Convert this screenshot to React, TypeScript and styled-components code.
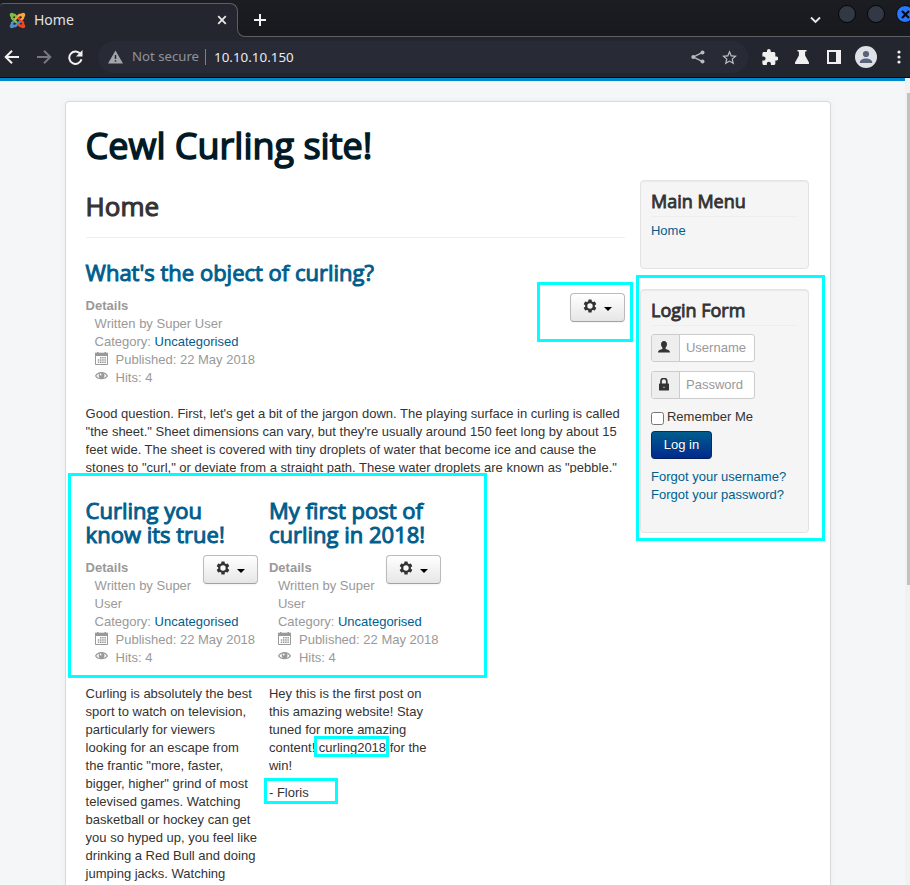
import React from 'react';
import styled, { createGlobalStyle } from 'styled-components';

const GlobalStyle = createGlobalStyle`
  * { box-sizing: border-box; }
  html, body { margin: 0; padding: 0; }
  body {
    width: 910px;
    height: 885px;
    overflow: hidden;
    background: #f4f6f7;
    font: 13px/18px "Liberation Sans", Arial, sans-serif;
    color: #333;
  }
  svg { display: block; flex: none; }
`;

const Window = styled.div`
  width: 910px;
  height: 885px;
  display: flex;
  flex-direction: column;
  overflow: hidden;
`;

const TabStrip = styled.div`
  height: 37px;
  flex: none;
  display: flex;
  background: linear-gradient(#1b1d23, #17191d);
`;

const Tab = styled.div`
  width: 238px;
  height: 34px;
  margin-top: 3px;
  padding: 0 10px 1px 9px;
  display: flex;
  align-items: center;
  background: #23262f;
  border-top: 1px solid #5c5e64;
  border-right: 1px solid #5c5e64;
  border-radius: 4px 8px 0 0;
  font: 14px/18px "Noto Sans", sans-serif;
  color: #e0e1e3;
`;

const TabTitle = styled.span`
  margin-left: 8px;
  flex: 1;
`;

const StripRest = styled.div`
  flex: 1;
  height: 37px;
  display: flex;
  position: relative;
  border-bottom: 1px solid #5c5e64;

  &::before,
  &::after {
    content: '';
    position: absolute;
    left: -1px;
    bottom: -1px;
    width: 8px;
    height: 8px;
    background: #23262f;
  }

  &::after {
    background: #17191d;
    border-left: 1px solid #5c5e64;
    border-bottom: 1px solid #5c5e64;
    border-bottom-left-radius: 8px;
  }
`;

const NewTab = styled.div`
  margin: 13px 0 0 15px;
  flex: 1;
`;

const Chevron = styled.div`
  margin: 16px 17px 0 0;
`;

const WindowButton = styled.div<{ $close?: boolean }>`
  width: 18px;
  height: 18px;
  flex: none;
  margin: 5px 11px 0 0;
  display: flex;
  align-items: center;
  justify-content: center;
  border-radius: 50%;
  border: 1px solid #050608;
  background: ${(p) => (p.$close ? '#2777ff' : '#333944')};
`;

const ButtonGroup = styled.div`
  width: 72px;
  display: flex;
  overflow: hidden;
`;

const Toolbar = styled.div`
  height: 41px;
  flex: none;
  display: flex;
  align-items: center;
  padding-left: 4px;
  background: #23262f;
  border-bottom: 1px solid #05070a;
`;

const NavIcon = styled.div<{ $gap: number }>`
  margin-right: ${(p) => p.$gap}px;
`;

const Omnibox = styled.div`
  width: 650px;
  height: 32px;
  flex: none;
  margin-right: 14px;
  padding: 0 11px 0 10px;
  display: flex;
  align-items: center;
  border-radius: 16px;
  background: #282b36;
  font: 13.4px/18px "Noto Sans", sans-serif;
  color: #e9eaed;
`;

const Security = styled.span`
  width: 74px;
  margin-left: 9px;
  padding-right: 7px;
  border-right: 1px solid #7d8087;
  height: 16px;
  line-height: 15px;
  white-space: nowrap;
  font-size: 13.2px;
  color: #90939a;
`;

const Url = styled.span`
  flex: 1;
  margin: -1px 0 0 8px;
`;

const Viewport = styled.div`
  flex: 1;
  display: flex;
  position: relative;
  min-height: 0;
`;

const Page = styled.div`
  width: 905px;
  height: 807px;
  border-top: 3px solid #0088cc;
  background: #f4f6f7;
  overflow: hidden;
`;

const ScrollTrack = styled.div`
  width: 5px;
  padding: 15px 0 0 2px;
  background: #f1f1f1;
`;

const ScrollThumb = styled.div`
  height: 492px;
  background: #c1c1c1;
`;

const Sheet = styled.div`
  width: 766px;
  height: 830px;
  margin: 20px 0 0 65px;
  padding: 20px 19.6px;
  border: 1px solid #d9dadb;
  border-radius: 4px;
  background: #fff;
  box-shadow: 0 0 6px rgba(0, 0, 0, 0.05);
`;

const SiteTitle = styled.div`
  height: 58px;
  font: 400 36px/48px "Open Sans", sans-serif;
  -webkit-text-stroke: 1.5px #001a27;
  color: #001a27;
  white-space: nowrap;
`;

const Columns = styled.div`
  display: flex;
  justify-content: space-between;
  align-items: flex-start;
  width: 723.4px;
`;

const Main = styled.main`
  width: 539px;
`;

const PageTitle = styled.h1`
  height: 58px;
  margin: 0;
  padding-top: 8px;
  border-bottom: 1px solid #eee;
  font: 400 26px/36px "Open Sans", sans-serif;
  -webkit-text-stroke: 1.1px #333;
`;

const PostTitle = styled.h2<{ $top: number; $bottom: number }>`
  margin: 0;
  padding: ${(p) => p.$top}px 0 ${(p) => p.$bottom}px;
  font: 400 22px/24px "Open Sans", sans-serif;
  -webkit-text-stroke: 1px #005e8d;
  color: #005e8d;
  white-space: nowrap;
`;

const PostHead = styled.div`
  display: flex;
  justify-content: space-between;
  color: #999;
`;

const Meta = styled.div`
  white-space: nowrap;
`;

const MetaTitle = styled.div`
  font-weight: bold;
`;

const MetaLine = styled.div`
  height: 18px;
  padding-left: 9px;
  display: flex;
  white-space: pre;
`;

const MetaIcon = styled.span`
  width: 21px;
  flex: none;
  padding-top: 1px;
`;

const Link = styled.a`
  color: #005e8d;
`;

const OverlapSlot = styled.div`
  width: 55px;
  flex: none;
  margin-left: -55px;
`;

const GearButton = styled.div`
  width: 55px;
  height: 29px;
  margin-top: -4px;
  padding-left: 12px;
  display: flex;
  gap: 7px;
  border: 1px solid #bbb;
  border-bottom-color: #a2a2a2;
  border-radius: 4px;
  background: linear-gradient(#fff, #e6e6e6);
  box-shadow: 0 1px 2px rgba(0, 0, 0, 0.05);
`;

const GearSlot = styled.div`
  padding-top: 5px;
`;

const Caret = styled.div`
  width: 8px;
  height: 4px;
  margin-top: 13px;
  border: 4px solid transparent;
  border-top-color: #000;
  border-bottom: 0;
`;

const Lead = styled.p`
  height: 68px;
  margin: 18px 0 0;
  overflow: hidden;
  white-space: nowrap;
`;

const PostRow = styled.div`
  display: flex;
  gap: 11.4px;
  padding-top: 25px;
`;

const Post = styled.article`
  width: 172px;
`;

const Text = styled.p<{ $top: number }>`
  margin: ${(p) => p.$top}px 0 0;
  white-space: nowrap;
`;

const Side = styled.aside`
  width: 169px;
`;

const Well = styled.section<{ $height: number }>`
  height: ${(p) => p.$height}px;
  margin-bottom: 20px;
  padding: 10px;
  border: 1px solid #e3e3e3;
  border-radius: 4px;
  background: #f5f5f5;
  box-shadow: inset 0 1px 1px rgba(0, 0, 0, 0.05);
`;

const WellTitle = styled.h3`
  height: 26px;
  margin: 0 0 5px;
  border-bottom: 1px solid #eee;
  font: 400 18px/20px "Open Sans", sans-serif;
  -webkit-text-stroke: 0.85px #333;
`;

const FieldGroup = styled.div`
  padding-top: 3px;
`;

const Field = styled.div`
  width: 104px;
  height: 28px;
  margin: 0 0 9px;
  display: flex;
  border: 1px solid #ccc;
  border-radius: 3px;
  overflow: hidden;
  background: #fff;
`;

const Prepend = styled.div`
  width: 28px;
  padding: 6px 0 0 6px;
  border-right: 1px solid #ccc;
  background: #eee;
`;

const Placeholder = styled.div`
  padding: 4px 6px;
  color: #999;
`;

const Remember = styled.label`
  height: 23px;
  display: flex;
  gap: 3px;
`;

const Checkbox = styled.span`
  width: 13px;
  height: 13px;
  margin-top: 4px;
  border: 1px solid #767676;
  border-radius: 2.5px;
  background: #fff;
`;

const LoginButton = styled.button`
  width: 61px;
  height: 28px;
  display: block;
  margin: 0 0 9px;
  padding: 0;
  border: 1px solid #002a80;
  border-bottom-color: #001f5c;
  border-radius: 4px;
  background: linear-gradient(#005e8d, #002a8d);
  font: 13px/18px "Liberation Sans", Arial, sans-serif;
  color: #fff;
  text-shadow: 0 -1px 0 rgba(0, 0, 0, 0.25);
`;

const LinkLine = styled.div`
  height: 18px;
  white-space: nowrap;
`;

const Highlight = styled.div<{ $x: number; $y: number; $w: number; $h: number }>`
  position: absolute;
  left: ${(p) => p.$x}px;
  top: ${(p) => p.$y - 78}px;
  width: ${(p) => p.$w}px;
  height: ${(p) => p.$h}px;
  border: 3px solid #00ffff;
`;

const JoomlaLogo = () => (
  <svg width="17" height="17" viewBox="0 0 17 17" fill="none" strokeWidth="2.4">
    <path d="M3 14h3.400l5.400-5.200M3 14v-3l2.200-2" stroke="#5091cd" />
    <path d="M14 14v-3.400L9.500 6M14 14h-2.800l-2.200-2" stroke="#f44321" />
    <path d="M14 3h-3.600L5.200 8.200M14 3v3l-2 2" stroke="#f9a541" />
    <path d="M3 2.800v3.400l5 4.600M3 3h2.800l2 2" stroke="#7ac143" />
    <circle cx="2.900" cy="2.900" r="2.200" fill="#7ac143" />
    <circle cx="14.100" cy="2.900" r="2.200" fill="#f9a541" />
    <circle cx="14.100" cy="14.100" r="2.200" fill="#f44321" />
    <circle cx="2.900" cy="14.100" r="2.200" fill="#5091cd" />
  </svg>
);

const Gear = () => (
  <svg width="14" height="14" viewBox="-7 -7 14 14" fill="#333">
    {[0, 60, 120].map((a) => (
      <rect key={a} x="-1.700" y="-6.400" width="3.400" height="12.800" rx=".5" transform={`rotate(${a})`} />
    ))}
    <circle r="4.900" />
    <circle r="2.700" fill="#f9f9f9" />
  </svg>
);

const Calendar = () => (
  <svg width="13" height="14" viewBox="0 0 13 14">
    <path d="M.5 2.500h12v10H.5z" fill="#fff" stroke="#999" />
    <path d="M0 .7h13V4H0z" fill="#999" />
    <path d="M2 0h1.500v1H2zM9.500 0H11v1H9.500z" fill="#999" />
    <path d="M5 5h1.500v1.500H5zM7.200 5h1.500v1.500H7.200zM9.400 5h1.500v1.500H9.400zM2.800 7.300h1.500v1.500H2.800zM5 7.300h1.500v1.500H5zM7.200 7.300h1.500v1.500H7.200zM9.400 7.300h1.500v1.500H9.400zM2.800 9.600h1.500v1.500H2.800zM5 9.600h1.500v1.500H5zM7.200 9.600h1.500v1.500H7.200zM9.400 9.600h1.500v1.500H9.400z" fill="#999" />
  </svg>
);

const Eye = () => (
  <svg width="13" height="14" viewBox="0 0 13 14">
    <path d="M.6 6C3 1.500 10 1.500 12.400 6 10 9.600 3 9.600.6 6z" fill="#fff" stroke="#999" strokeWidth="1.200" />
    <circle cx="6.600" cy="5.500" r="2.900" fill="#999" />
    <circle cx="5.700" cy="4.500" r=".9" fill="#fff" />
  </svg>
);

const Person = () => (
  <svg width="12" height="13" viewBox="0 0 12 13" fill="#333">
    <path d="M6 0c2 0 3 1.400 3 3.300 0 1.500-.7 2.700-1.400 3.400v1.300c1.900.5 4.400 1.200 4.400 3.500H0C0 9.200 2.500 8.500 4.400 8V6.700C3.700 6 3 4.800 3 3.300 3 1.400 4 0 6 0z" />
  </svg>
);

const Lock = () => (
  <svg width="12" height="14" viewBox="0 0 12 14">
    <path d="M3 6V3.300a2.900 2.900 0 0 1 5.800 0V6" fill="none" stroke="#333" strokeWidth="1.700" />
    <rect x="1" y="5.400" width="10" height="7.200" rx=".7" fill="#333" />
    <circle cx="6" cy="9.200" r=".8" fill="#bbb" />
  </svg>
);

const SettingsButton = () => (
  <GearButton>
    <GearSlot><Gear /></GearSlot>
    <Caret />
  </GearButton>
);

const Details = ({ author }: { author: string[] }) => (
  <PostHead>
    <Meta>
      <MetaTitle>Details</MetaTitle>
      {author.map((line) => <MetaLine key={line}>{line}</MetaLine>)}
      <MetaLine>Category: <Link>Uncategorised</Link></MetaLine>
      <MetaLine><MetaIcon><Calendar /></MetaIcon>Published: 22 May 2018</MetaLine>
      <MetaLine><MetaIcon><Eye /></MetaIcon>Hits: 4</MetaLine>
    </Meta>
    <OverlapSlot><SettingsButton /></OverlapSlot>
  </PostHead>
);

const Lines = ({ of: lines }: { of: string[] }) => (
  <>
    {lines.map((line) => (
      <React.Fragment key={line}>{line}<br /></React.Fragment>
    ))}
  </>
);

export default function App() {
  return (
    <Window>
      <GlobalStyle />
      <TabStrip>
        <Tab>
          <JoomlaLogo />
          <TabTitle>Home</TabTitle>
          <svg width="10" height="10" viewBox="0 0 10 10"><path d="M1.200 1.200l7.600 7.600M8.800 1.200L1.200 8.800" stroke="#e8e8e8" strokeWidth="1.800" /></svg>
        </Tab>
        <StripRest>
          <NewTab>
            <svg width="14" height="14" viewBox="0 0 14 14"><path d="M7 1v12M1 7h12" stroke="#f2f2f2" strokeWidth="2" /></svg>
          </NewTab>
          <Chevron>
            <svg width="11" height="8" viewBox="0 0 11 8"><path d="M1 1.500l4.500 4.500L10 1.500" fill="none" stroke="#e8e8e8" strokeWidth="1.900" /></svg>
          </Chevron>
          <ButtonGroup>
            <WindowButton />
            <WindowButton />
            <WindowButton $close>
              <svg width="9" height="9" viewBox="0 0 9 9"><path d="M1 1l7 7M8 1L1 8" stroke="#060b16" strokeWidth="2.200" /></svg>
            </WindowButton>
          </ButtonGroup>
        </StripRest>
      </TabStrip>
      <Toolbar>
        <NavIcon $gap={17}>
          <svg width="16" height="16" viewBox="0 0 16 16" fill="none" stroke="#f1f1f1" strokeWidth="2"><path d="M15 8H2.500M8 1.700L1.700 8 8 14.300" /></svg>
        </NavIcon>
        <NavIcon $gap={15}>
          <svg width="16" height="16" viewBox="0 0 16 16" fill="none" stroke="#76787d" strokeWidth="2"><path d="M0 8h12.500M7 1.700L13.300 8 7 14.300" /></svg>
        </NavIcon>
        <NavIcon $gap={15}>
          <svg width="15" height="15" viewBox="0 0 15 15"><path d="M12.600 4.200A6.200 6.200 0 1 0 13.500 9.200" fill="none" stroke="#f1f1f1" strokeWidth="2" /><path d="M14.500 0v6.500H8z" fill="#f1f1f1" /></svg>
        </NavIcon>
        <Omnibox>
          <svg width="15" height="14" viewBox="0 0 15 14"><path d="M7.500.5L15 13.500H0z" fill="#a2a5ab" /><path d="M7.500 5v4M7.500 10.200v1.600" stroke="#282b36" strokeWidth="1.500" /></svg>
          <Security>Not secure</Security>
          <Url>10.10.10.150</Url>
          <NavIcon $gap={17}>
            <svg width="14" height="14" viewBox="0 0 14 14" fill="#b9bbc0"><path d="M11.500 2.300L2.500 7l9 4.700" fill="none" stroke="#b9bbc0" strokeWidth="1.400" /><circle cx="11.500" cy="2.500" r="2" /><circle cx="2.300" cy="7" r="2" /><circle cx="11.500" cy="11.500" r="2" /></svg>
          </NavIcon>
          <svg width="15" height="15" viewBox="0 0 24 24" fill="#b9bbc0"><path d="M24 9.200l-8.600-.7L12 .5 8.600 8.500 0 9.200l6.500 5.700-1.900 8.400L12 18.800l7.400 4.500-2-8.400L24 9.200zM12 16.600l-4.500 2.700 1.200-5.100-4-3.500 5.200-.4L12 5.400l2.100 4.900 5.200.4-4 3.500 1.200 5.100L12 16.600z" /></svg>
        </Omnibox>
        <NavIcon $gap={17}>
          <svg width="16" height="16" viewBox="1.500 1 21 21" fill="#f0f0f0"><path d="M20.500 11H19V7c0-1.100-.9-2-2-2h-4V3.500a2.500 2.500 0 0 0-5 0V5H4c-1.100 0-1.990.9-1.990 2v3.800H3.500c1.490 0 2.700 1.210 2.700 2.700s-1.210 2.700-2.700 2.700H2V20c0 1.100.9 2 2 2h3.800v-1.500c0-1.490 1.210-2.700 2.700-2.700 1.490 0 2.700 1.210 2.700 2.700V22H17c1.100 0 2-.9 2-2v-4h1.500a2.500 2.500 0 0 0 0-5z" /></svg>
        </NavIcon>
        <NavIcon $gap={18}>
          <svg width="14" height="14" viewBox="0 0 14 14" fill="#f0f0f0"><path d="M2.500 0h9v1.500h-1.400v4L14 12.500c.3.800-.1 1.500-1 1.500H1c-.9 0-1.300-.7-1-1.500l3.900-7v-4H2.500z" /></svg>
        </NavIcon>
        <NavIcon $gap={14}>
          <svg width="14" height="14" viewBox="0 0 14 14"><path d="M0 0h14v14H0z" fill="#f0f0f0" /><path d="M2 2h7v10H2z" fill="#23262f" /></svg>
        </NavIcon>
        <NavIcon $gap={20}>
          <svg width="22" height="22" viewBox="0 0 22 22"><circle cx="11" cy="11" r="11" fill="#dee1e6" /><circle cx="11" cy="8" r="3.100" fill="#5a6478" /><path d="M4.800 16.500c0-2.700 3.400-4 6.200-4s6.200 1.300 6.200 4v.5H4.800z" fill="#5a6478" /></svg>
        </NavIcon>
        <svg width="4" height="14" viewBox="0 0 4 14" fill="#f0f0f0"><circle cx="2" cy="2" r="1.600" /><circle cx="2" cy="7" r="1.600" /><circle cx="2" cy="12" r="1.600" /></svg>
      </Toolbar>
      <Viewport>
        <Page>
          <Sheet>
            <SiteTitle>Cewl Curling site!</SiteTitle>
            <Columns>
              <Main>
                <PageTitle>Home</PageTitle>
                <PostTitle $top={22} $bottom={13}>What's the object of curling?</PostTitle>
                <Details author={['Written by Super User']} />
                <Lead>
                  <Lines of={[
                    "Good question. First, let's get a bit of the jargon down. The playing surface in curling is called",
                    '"the sheet." Sheet dimensions can vary, but they\'re usually around 150 feet long by about 15',
                    'feet wide. The sheet is covered with tiny droplets of water that become ice and cause the',
                    'stones to "curl," or deviate from a straight path. These water droplets are known as "pebble."',
                  ]} />
                </Lead>
                <PostRow>
                  <Post>
                    <PostTitle $top={0} $bottom={13}>Curling you<br />know its true!</PostTitle>
                    <Details author={['Written by Super', 'User']} />
                    <Text $top={18}>
                      <Lines of={[
                        'Curling is absolutely the best', 'sport to watch on television,', 'particularly for viewers',
                        'looking for an escape from', 'the frantic "more, faster,', 'bigger, higher" grind of most',
                        'televised games. Watching', 'basketball or hockey can get', 'you so hyped up, you feel like',
                        'drinking a Red Bull and doing', 'jumping jacks. Watching',
                      ]} />
                    </Text>
                  </Post>
                  <Post>
                    <PostTitle $top={0} $bottom={13}>My first post of<br />curling in 2018!</PostTitle>
                    <Details author={['Written by Super', 'User']} />
                    <Text $top={18}>
                      <Lines of={['Hey this is the first post on', 'this amazing website! Stay', 'tuned for more amazing', 'content! curling2018 for the', 'win!']} />
                    </Text>
                    <Text $top={9}>- Floris</Text>
                  </Post>
                </PostRow>
              </Main>
              <Side>
                <Well $height={89}>
                  <WellTitle>Main Menu</WellTitle>
                  <LinkLine><Link>Home</Link></LinkLine>
                </Well>
                <Well $height={244}>
                  <WellTitle>Login Form</WellTitle>
                  <FieldGroup>
                    <Field><Prepend><Person /></Prepend><Placeholder>Username</Placeholder></Field>
                    <Field><Prepend><Lock /></Prepend><Placeholder>Password</Placeholder></Field>
                  </FieldGroup>
                  <Remember><Checkbox />Remember Me</Remember>
                  <LoginButton>Log in</LoginButton>
                  <LinkLine><Link>Forgot your username?</Link></LinkLine>
                  <LinkLine><Link>Forgot your password?</Link></LinkLine>
                </Well>
              </Side>
            </Columns>
          </Sheet>
        </Page>
        <ScrollTrack><ScrollThumb /></ScrollTrack>
        <Highlight $x={537} $y={282} $w={96} $h={60} />
        <Highlight $x={636} $y={275} $w={189} $h={266} />
        <Highlight $x={68} $y={473} $w={419} $h={205} />
        <Highlight $x={314} $y={736} $w={75} $h={21} />
        <Highlight $x={264} $y={778} $w={74} $h={26} />
      </Viewport>
    </Window>
  );
}
